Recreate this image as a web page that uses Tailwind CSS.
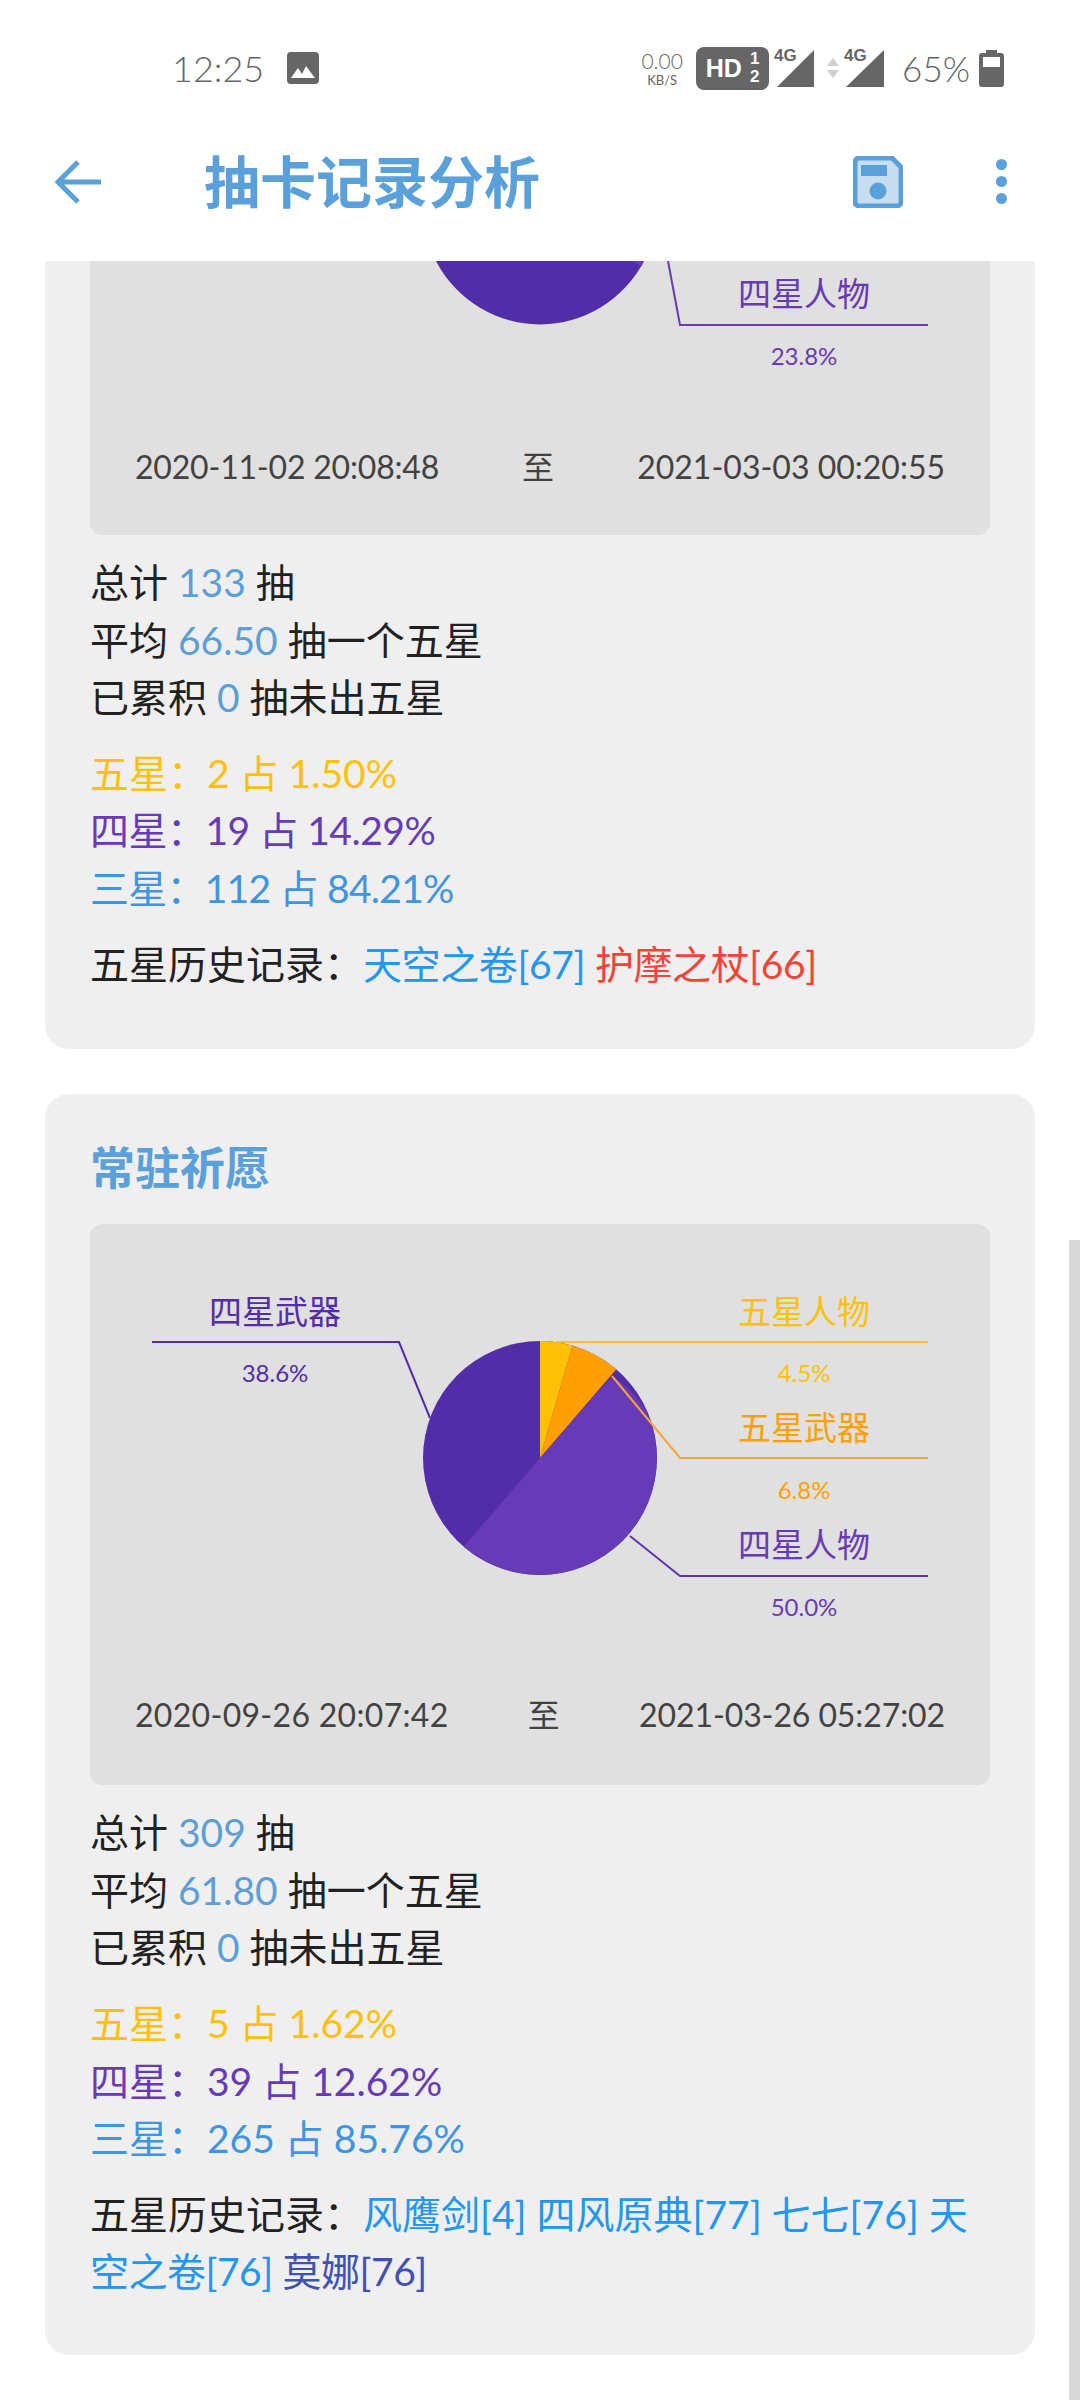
<!DOCTYPE html>
<html lang="zh-CN">
<head>
    <meta charset="UTF-8">
    <meta name="viewport" content="width=device-width, initial-scale=1.0">
    <title>抽卡记录分析</title>
    <script src="https://cdn.jsdelivr.net/npm/@tailwindcss/browser@4"></script>
</head>
<body class="bg-white font-['Lato','Noto_Sans_CJK_SC',sans-serif]">
<div class="relative w-[1080px] h-[2400px] overflow-hidden bg-white">

    <!-- status bar -->
    <div class="h-[136px] flex items-center justify-between pl-[172px] pr-[76px] text-[#666666]">
        <div class="flex items-center gap-[23px]">
            <span class="text-[36px] font-light leading-none">12:25</span>
            <svg width="32" height="32" viewBox="0 0 32 32"><rect width="32" height="32" rx="4" fill="#666666"/><path d="M4 26l7-10 4 6 4-8 9 12z" fill="#ffffff"/></svg>
        </div>
        <div class="flex items-center">
            <div class="w-[42px] flex flex-col items-center leading-none">
                <span class="text-[21px] font-light">0.00</span>
                <span class="text-[13px] mt-[3px]">KB/S</span>
            </div>
            <div class="ml-[13px] w-[73px] h-[43px] rounded-[8px] bg-[#666666] text-white flex items-center justify-center gap-[8px] font-bold">
                <span class="text-[25px] leading-none font-['Liberation_Sans']">HD</span>
                <div class="flex flex-col items-center text-[17px] leading-[18px] font-['Liberation_Sans']"><span>1</span><span>2</span></div>
            </div>
            <div class="relative ml-[8px] w-[37px] h-[37px]">
                <svg width="37" height="37" viewBox="0 0 37 37" class="absolute top-0 left-0"><path d="M37 0v37H0z" fill="#666666"/></svg>
                <span class="absolute -top-[3px] -left-[3px] text-[17px] leading-none font-bold text-[#666666] font-['Liberation_Sans']">4G</span>
            </div>
            <svg class="ml-[13px]" width="12" height="20" viewBox="0 0 12 20"><path d="M6 0l6 8H0z" fill="#d0d0d0"/><path d="M6 20l6-8H0z" fill="#d0d0d0"/></svg>
            <div class="relative ml-[7px] w-[38px] h-[37px]">
                <svg width="38" height="37" viewBox="0 0 38 37" class="absolute top-0 left-0"><path d="M38 0v37H0z" fill="#666666"/></svg>
                <span class="absolute -top-[3px] -left-[2px] text-[17px] leading-none font-bold text-[#666666] font-['Liberation_Sans']">4G</span>
            </div>
            <span class="ml-[18px] text-[35px] font-light leading-none">65%</span>
            <svg class="ml-[9px]" width="25" height="37" viewBox="0 0 25 37"><path d="M7 0h11v3h4a3 3 0 0 1 3 3v28a3 3 0 0 1-3 3H3a3 3 0 0 1-3-3V6a3 3 0 0 1 3-3h4z" fill="#666666"/><rect x="4" y="7" width="17" height="10" fill="#ffffff"/></svg>
        </div>
    </div>

    <!-- app bar -->
    <div class="h-[125px] pb-[34px] flex items-center pl-[55px] pr-[73px] bg-white text-[#5aa0da]">
        <svg width="46" height="44" viewBox="0 0 46 44" fill="none" stroke="#5aa0da" stroke-width="5"><path d="M46 22H4M23 2L3 22l20 20"/></svg>
        <h1 class="ml-[103px] -mt-[6px] text-[56px] font-['Noto_Sans_CJK_SC'] font-bold leading-none">抽卡记录分析</h1>
        <svg class="ml-auto" width="50" height="52" viewBox="0 0 50 52"><path d="M6 2h33l9 9v35a4 4 0 0 1-4 4H6a4 4 0 0 1-4-4V6a4 4 0 0 1 4-4z" fill="#c9ddf0" stroke="#5aa0da" stroke-width="5" stroke-linejoin="round"/><rect x="8" y="9" width="26" height="11" fill="#5aa0da"/><circle cx="25" cy="35" r="8.5" fill="#5aa0da"/></svg>
        <div class="ml-[93px] flex flex-col gap-[6px]">
            <span class="w-[11px] h-[11px] rounded-full bg-[#5aa0da]"></span>
            <span class="w-[11px] h-[11px] rounded-full bg-[#5aa0da]"></span>
            <span class="w-[11px] h-[11px] rounded-full bg-[#5aa0da]"></span>
        </div>
    </div>

    <!-- list -->
    <div class="flex flex-col gap-[45px] px-[45px]">

        <!-- first card, scrolled under the app bar -->
        <div class="bg-[#efefef] rounded-b-[24px] pb-[56px]">
            <div class="mx-[45px] bg-[#e0e0e0] rounded-b-[12px]">
                <svg class="block" width="900" height="139" viewBox="90 261 900 139">
                    <path d="M436 261a117 117 0 0 0 208 0z" fill="#512da8"/>
                    <path d="M632 261l9.500 5.500 2.500-5.500z" fill="#673ab7"/>
                    <path d="M668 261l12 64h248" fill="none" stroke="#673ab7" stroke-width="2"/>
                    <text x="804" y="306" text-anchor="middle" font-size="33" fill="#673ab7">四星人物</text>
                    <text x="804" y="365" text-anchor="middle" font-size="24" fill="#673ab7">23.8%</text>
                </svg>
                <div class="h-[135px] flex justify-between px-[45px] pt-[45px] text-[32px] leading-[44px] text-[#424242]">
                    <span class="tracking-[-0.2px]">2020-11-02 20:08:48</span><span>至</span><span>2021-03-03 00:20:55</span>
                </div>
            </div>
            <div class="pl-[45px] pr-[45px] pt-[19px] flex flex-col gap-[18px] text-[39px] leading-[57.600px] text-[#212121]">
                <div>
                    <p>总计 <span class="text-[#5c9fd6]">133</span> 抽</p>
                    <p>平均 <span class="text-[#5c9fd6]">66.50</span> 抽一个五星</p>
                    <p>已累积 <span class="text-[#5c9fd6]">0</span> 抽未出五星</p>
                </div>
                <div>
                    <p class="text-[#ffc107]">五星：2 占 1.50%</p>
                    <p class="text-[#673ab7] tracking-[-0.5px]">四星：19 占 14.29%</p>
                    <p class="text-[#3d95e3] tracking-[-0.75px]">三星：112 占 84.21%</p>
                </div>
                <p>五星历史记录：<span class="text-[#2196f3] tracking-[-0.4px]">天空之卷[67]</span> <span class="text-[#f44336] tracking-[-0.4px]">护摩之杖[66]</span></p>
            </div>
        </div>

        <!-- 常驻祈愿 -->
        <div class="bg-[#efefef] rounded-[24px] pb-[54px]">
            <h2 class="pl-[45px] h-[130px] pt-[47px] text-[45px] leading-[50px] font-['Noto_Sans_CJK_SC'] font-bold text-[#5aa0da]">常驻祈愿</h2>
            <div class="mx-[45px] bg-[#e0e0e0] rounded-[12px]">
                <svg class="block" width="900" height="426" viewBox="90 1223 900 426">
                    <circle cx="540" cy="1457" r="117" fill="#512da8"/>
                    <path d="M540 1457V1340a117 117 0 0 1 32.600 4.700z" fill="#ffc107"/>
                    <path d="M540 1457l32.600-112.300a117 117 0 0 1 43.700 23.600z" fill="#ffa000"/>
                    <path d="M540 1457l72-82q30 20 38.900 45.300a117 117 0 0 1-187.200 125.400z" fill="#673ab7"/>
                    <path d="M556 1341H928" fill="none" stroke="#f5bd3a" stroke-width="2"/>
                    <path d="M612 1375l68 82h248" fill="none" stroke="#f0a638" stroke-width="2"/>
                    <path d="M630 1535l50 40h248" fill="none" stroke="#5e35b1" stroke-width="2"/>
                    <path d="M152 1341h247l31 76" fill="none" stroke="#512da8" stroke-width="2"/>
                    <text x="275" y="1323" text-anchor="middle" font-size="33" fill="#512da8">四星武器</text>
                    <text x="275" y="1381" text-anchor="middle" font-size="24" fill="#512da8">38.6%</text>
                    <text x="804" y="1323" text-anchor="middle" font-size="33" fill="#ffc107">五星人物</text>
                    <text x="804" y="1381" text-anchor="middle" font-size="24" fill="#ffc107">4.5%</text>
                    <text x="804" y="1439" text-anchor="middle" font-size="33" fill="#ffa000">五星武器</text>
                    <text x="804" y="1498" text-anchor="middle" font-size="24" fill="#ffa000">6.8%</text>
                    <text x="804" y="1556" text-anchor="middle" font-size="33" fill="#673ab7">四星人物</text>
                    <text x="804" y="1615" text-anchor="middle" font-size="24" fill="#673ab7">50.0%</text>
                </svg>
                <div class="h-[135px] flex justify-between px-[45px] pt-[43px] text-[32px] leading-[44px] text-[#424242]">
                    <span class="tracking-[0.3px]">2020-09-26 20:07:42</span><span>至</span><span class="tracking-[-0.1px]">2021-03-26 05:27:02</span>
                </div>
            </div>
            <div class="pl-[45px] pr-[45px] pt-[19px] flex flex-col gap-[18px] text-[39px] leading-[57.600px] text-[#212121]">
                <div>
                    <p>总计 <span class="text-[#5c9fd6]">309</span> 抽</p>
                    <p>平均 <span class="text-[#5c9fd6]">61.80</span> 抽一个五星</p>
                    <p>已累积 <span class="text-[#5c9fd6]">0</span> 抽未出五星</p>
                </div>
                <div>
                    <p class="text-[#ffc107]">五星：5 占 1.62%</p>
                    <p class="text-[#673ab7]">四星：39 占 12.62%</p>
                    <p class="text-[#3d95e3]">三星：265 占 85.76%</p>
                </div>
                <p>五星历史记录：<span class="text-[#2196f3]">风鹰剑[4] 四风原典[77] 七七[76] 天</span><br><span class="text-[#2196f3] tracking-[-0.5px]">空之卷[76]</span> <span class="text-[#3f51b5] tracking-[-0.5px]">莫娜[76]</span></p>
            </div>
        </div>
    </div>

    <!-- scrollbar -->
    <div class="absolute right-0 top-[1240px] bottom-0 w-[11px] bg-[#d9d9d9]"></div>
</div>
</body>
</html>
